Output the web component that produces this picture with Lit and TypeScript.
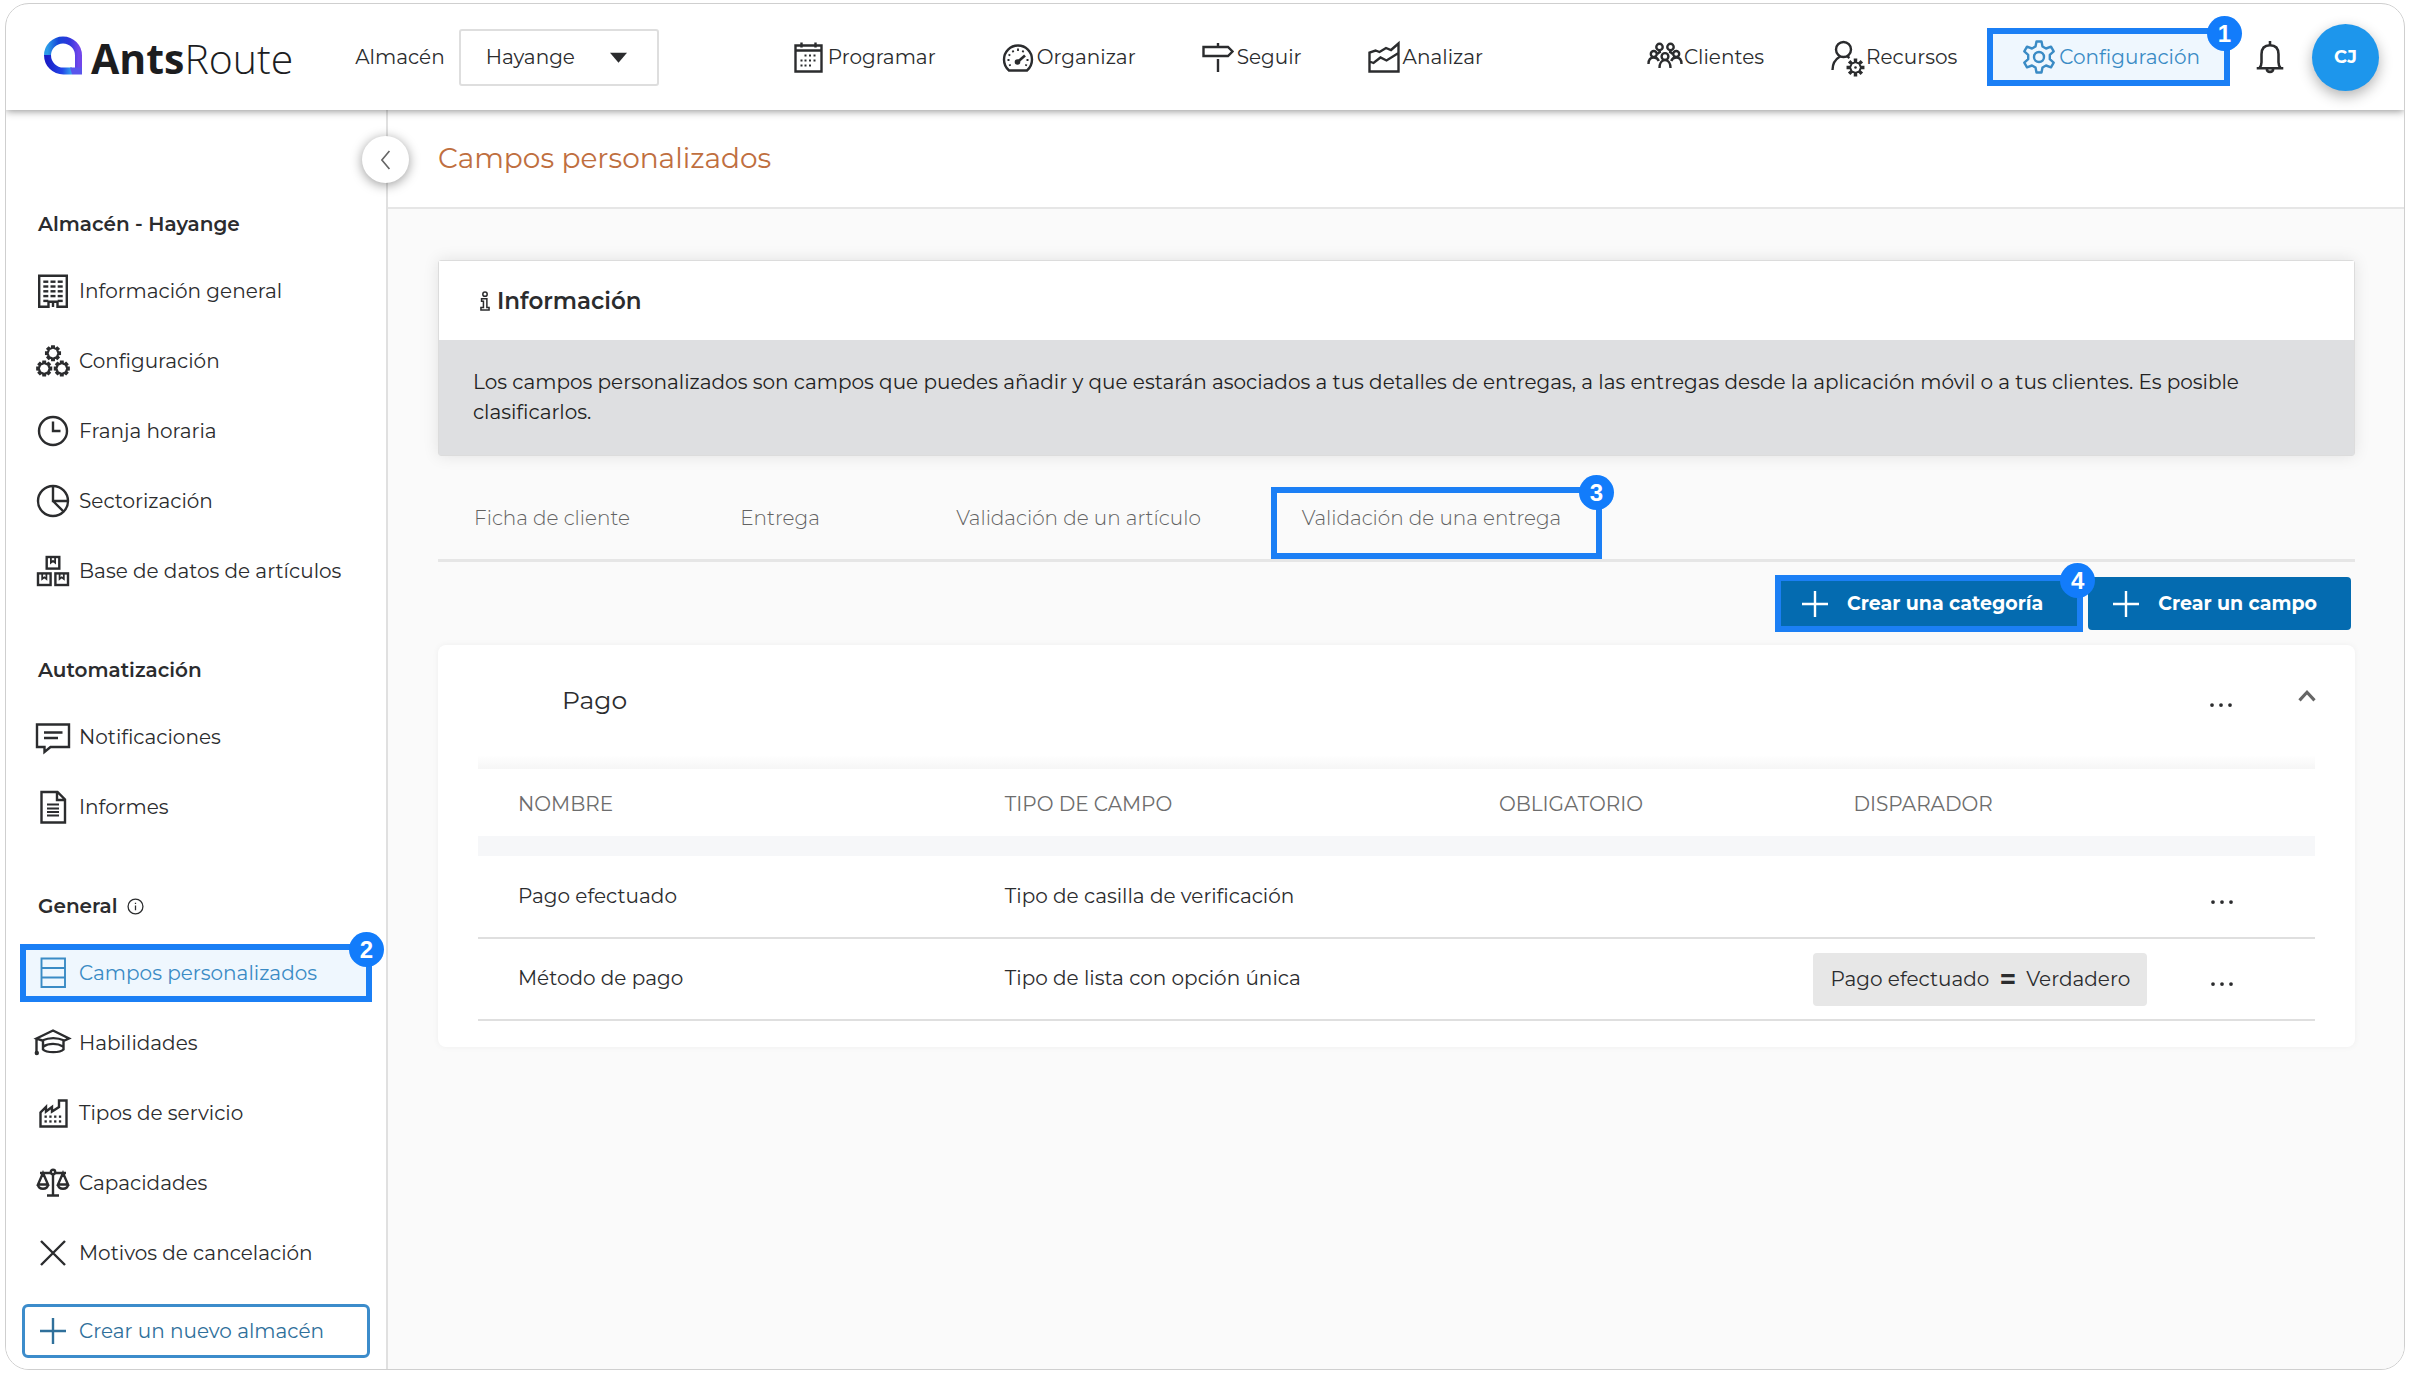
import { LitElement, html, svg, css, nothing, type TemplateResult, type SVGTemplateResult } from "lit";
import { customElement, property, state } from "lit/decorators.js";
import { classMap } from "lit/directives/class-map.js";

/** Outline of a cog with straight-sided teeth. */
function cog(cx: number, cy: number, outer: number, inner: number, teeth: number, top = 0.2, base = 0.3): string {
  const step = (Math.PI * 2) / teeth;
  const pts: string[] = [];
  for (let i = 0; i < teeth; i++) {
    const mid = i * step - Math.PI / 2;
    const corners: [number, number][] = [[inner, -base], [outer, -top], [outer, top], [inner, base]];
    for (const [r, f] of corners) {
      const a = mid + f * step;
      pts.push(`${(cx + r * Math.cos(a)).toFixed(2)} ${(cy + r * Math.sin(a)).toFixed(2)}`);
    }
  }
  return `M${pts.join("L")}Z`;
}

const grid = (xs: number[], ys: number[], w: number, h: number) =>
  ys.map((y) => xs.map((x) => svg`<rect x=${x} y=${y} width=${w} height=${h} fill="currentColor" stroke="none"></rect>`));

const box = (x: number, y: number) => svg`
  <rect x=${x} y=${y} width="12.6" height="11.6"></rect>
  <path stroke-width="1.8" d="M${x + 4.2} ${y}v5.6l2.1-1.6 2.1 1.6v-5.6"></path>`;

const ICONS: Record<string, SVGTemplateResult> = {
  calendar: svg`<path d="M2.500 4.500h26v26H2.500zM2.500 9.500h26M8.500 1.500v5M22.500 1.500v5"></path>
    ${grid([11.5, 16, 20.5], [13.5], 2, 2)}${grid([7.5, 11.5, 16, 20.5], [18.5], 2, 2)}${grid([7.5, 11.5, 16], [23.5], 2, 2)}`,
  gauge: svg`<path d="M7 29.500C3.500 26.500 2 22.500 2 18.500a14 14 0 0 1 28 0c0 4-1.500 8-5 11z"></path>
    <path d="M15 21.500l8-7" stroke-width="2.600"></path>
    <circle cx="15.500" cy="21" r="2.800" fill="currentColor" stroke="none"></circle>
    <path stroke-width="1.800" d="M16 7.500v2.500M10.500 9.500l1 1.800M21.500 9.500l-1 1.800M6.500 13.500l1.800 1M5.500 19h2M24.500 19h2M7 24.500l1.800-.8M25 24.500l-1.800-.8"></path>`,
  sign: svg`<path d="M1.500 6h24.500l4.500 4.500-4.500 4.500H1.500zM16 2v4M16 18v13"></path>`,
  chart: svg`<path d="M1.500 30.500V11.500l6-2 4 1.500 6.500-4 5 2 7.500-6.500v28zM1.500 20.500l4 1.500 7-5.500 6 3 12-7.500M1.500 20.500v8"></path>`,
  people: svg`<circle cx="10.500" cy="6" r="3.200"></circle><circle cx="21.500" cy="6" r="3.200"></circle>
    <circle cx="4.800" cy="13" r="3"></circle><circle cx="27.200" cy="13" r="3"></circle><circle cx="16" cy="15.500" r="3.400"></circle>
    <path d="M-.5 23c0-4 2-6.500 5.300-6.500 2.500 0 4.200 1.200 5 3.500M32.500 23c0-4-2-6.500-5.300-6.500-2.500 0-4.200 1.200-5 3.500M10.500 27c0-4.500 2-8 5.500-8s5.500 3.500 5.500 8M8.500 13c1-1.500 2-2.200 3.500-2.500M23.500 13c-1-1.500-2-2.200-3.500-2.500"></path>`,
  userCog: svg`<circle cx="12.500" cy="8.500" r="7.500"></circle><path d="M1.500 29c0-6 2.500-10.500 7.500-13.500M16.500 15.500l2 1.500"></path>
    <path stroke-width="2" d=${cog(24.500, 26.500, 8, 5.2, 8, 0.12, 0.16)}></path><circle cx="24.500" cy="26.500" r="1.300" fill="currentColor" stroke="none"></circle>`,
  cog: svg`<path stroke-linejoin="round" d="M13.500 .5h5l1 5 3.500 2 5-1.800 2.700 4.600-3.900 3.500v4.400l3.900 3.500-2.700 4.600-5-1.800-3.500 2-1 5h-5l-1-5-3.500-2-5 1.800-2.700-4.600 3.900-3.500v-4.400l-3.900-3.500L4 5.700l5 1.800 3.500-2z"></path><circle cx="16" cy="16" r="5"></circle>`,
  bell: svg`<path d="M3.500 26.500h25M6 26.500c1.500-1.500 2-3 2-5.500v-7.500c0-5.500 3-8.500 8-8.500s8 3 8 8.500V21c0 2.500.5 4 2 5.500M16 1v4M13 27c0 4 6 4 6 0"></path>`,
  building: svg`<path d="M2.200 .8h27.600v31h-9.300v-5h-9v5H2.200z" stroke-width="2.400"></path>${grid([6.3, 13.5, 20.7], [5.5, 10.3, 15.1, 19.9], 5, 2.4)}${grid([6.3, 20.7], [24.7], 5, 2.4)}<path d="M16 27v5"></path>`,
  cogs: svg`<g stroke-width="2.200"><path d=${cog(16, 8.2, 7, 5.2, 8, 0.16, 0.26)}></path><path d=${cog(7.2, 23.5, 7, 5.2, 8, 0.16, 0.26)}></path><path d=${cog(24.8, 23.5, 7, 5.2, 8, 0.16, 0.26)}></path></g>`,
  clock: svg`<circle cx="16" cy="16" r="14"></circle><path d="M16 6.500V16h7.500"></path>`,
  pie: svg`<circle cx="16" cy="16" r="15"></circle><path d="M16 1v15h15M16 16l10.500 10.500"></path>`,
  boxes: svg`${box(9.7, 2)}${box(1, 18.4)}${box(18.4, 18.4)}`,
  chat: svg`<path d="M0 3.500h32v22.500H13.500l-6 5V26H0zM7 11.500h18.500M7 17h14"></path>`,
  doc: svg`<path d="M4.500 1h16l7.500 7.500V31.500H4.500zM20 1v8h8"></path><path stroke-width="1.800" d="M10 13.500h12M10 17.500h12M10 21h12M10 24.500h12"></path>`,
  fields: svg`<path d="M4.500 1.500h23.500v28.500h-23.500zM4.500 11h23.500M4.500 20.500h23.500" stroke-width="1.900"></path>`,
  cap: svg`<path d="M-.5 11.500L16 3.500l16 8-4.500 2c-7-3-15.500-3-22.500 0zM6 14v8.500c3.500 3.500 17 3.500 20.500 0V14M6.500 19.500c5-3.500 14-3.500 19.500 0M-.5 11.500v14"></path><circle cx="-.2" cy="26" r="2.200" fill="currentColor" stroke="none"></circle>`,
  factory: svg`<path d="M3.500 29.500V15.500L9 10v4.500l6-4.500v4.500l7-4.500V3.500h7.500v26z"></path>${grid([7.5, 12.3, 17.1, 21.9], [18.5, 23.3], 2.3, 2.3)}`,
  scale: svg`<circle cx="16" cy="5" r="2.200"></circle><path d="M16 7v21M10 28.500h12M3 6h10.500M18.500 6H29M6 6L1 17.500h10zM26 6l-5 11.500h10zM1 18c.8 5 9.200 5 10 0M21 18c.8 5 9.200 5 10 0"></path>`,
  cross: svg`<path d="M4 4l24 24M28 4L4 28"></path>`,
  plus: svg`<path d="M16 3v26M3 16h26"></path>`,
  info: svg`<circle cx="16" cy="16" r="14"></circle><path d="M16 14v9M16 9v2.500"></path>`,
  letterI: svg`<circle cx="16" cy="5" r="3.500"></circle><path d="M10.500 12.500h8.500v14h3.500v4h-13v-4h4v-10h-3z"></path>`,
  dots: svg`<g fill="currentColor" stroke="none"><circle cx="4" cy="16" r="2.500"></circle><circle cx="16" cy="16" r="2.500"></circle><circle cx="28" cy="16" r="2.500"></circle></g>`,
  back: svg`<path d="M21 3L10 16l11 13"></path>`,
  up: svg`<path stroke-width="5" d="M4 23L16 10l12 13"></path>`,
  caret: svg`<path fill="currentColor" stroke="none" d="M0 7h32L16 26z"></path>`,
};

@customElement("line-icon")
export class LineIcon extends LitElement {
  @property() name = "";
  static styles = css`
    :host { display: inline-flex; flex: none; width: 32px; height: 32px; }
    svg { width: 100%; height: 100%; overflow: visible; }
  `;
  render() {
    return html`<svg viewBox="0 0 32 32" fill="none" stroke="currentColor" stroke-width="2.400" aria-hidden="true">${ICONS[this.name] ?? nothing}</svg>`;
  }
}

interface Item { icon: string; label: string; step?: number; }

const MAIN_NAV: Item[] = [
  { icon: "calendar", label: "Programar" },
  { icon: "gauge", label: "Organizar" },
  { icon: "sign", label: "Seguir" },
  { icon: "chart", label: "Analizar" },
];
const SIDE_NAV: Item[] = [
  { icon: "people", label: "Clientes" },
  { icon: "userCog", label: "Recursos" },
  { icon: "cog", label: "Configuración", step: 1 },
];
const SECTIONS: { title: string; info?: boolean; items: Item[] }[] = [
  { title: "Almacén - Hayange", items: [
    { icon: "building", label: "Información general" },
    { icon: "cogs", label: "Configuración" },
    { icon: "clock", label: "Franja horaria" },
    { icon: "pie", label: "Sectorización" },
    { icon: "boxes", label: "Base de datos de artículos" },
  ] },
  { title: "Automatización", items: [
    { icon: "chat", label: "Notificaciones" },
    { icon: "doc", label: "Informes" },
  ] },
  { title: "General", info: true, items: [
    { icon: "fields", label: "Campos personalizados", step: 2 },
    { icon: "cap", label: "Habilidades" },
    { icon: "factory", label: "Tipos de servicio" },
    { icon: "scale", label: "Capacidades" },
    { icon: "cross", label: "Motivos de cancelación" },
  ] },
];
const TABS = ["Ficha de cliente", "Entrega", "Validación de un artículo", "Validación de una entrega"];
const ROWS: { name: string; type: string; trigger?: [string, string] }[] = [
  { name: "Pago efectuado", type: "Tipo de casilla de verificación" },
  { name: "Método de pago", type: "Tipo de lista con opción única", trigger: ["Pago efectuado", "Verdadero"] },
];

@customElement("app-root")
export class AppRoot extends LitElement {
  @state() private open = true;

  static styles = css`
    :host {
      display: block;
      --mark: #1b7ff5;
      --ink: #2b2c2e;
      font: 400 20px/30px Montserrat, Inter, "Open Sans", sans-serif;
      color: var(--ink);
      background: #fff;
    }
    *, *::before { box-sizing: border-box; }
    a { color: inherit; text-decoration: none; }
    button, select { font: inherit; color: inherit; border: 0; background: none; padding: 0; margin: 0; }
    button { cursor: pointer; }
    h1, h2, h3, p, ul { margin: 0; padding: 0; font: inherit; }
    ul { list-style: none; }

    .frame {
      display: flex; flex-direction: column;
      min-height: calc(100vh - 7px);
      margin: 3px 4px 4px 5px;
      border: 1px solid #cfcfcf; border-radius: 24px;
      overflow: hidden;
    }

    .top {
      position: relative; z-index: 2;
      display: flex; align-items: center;
      min-height: 106px; padding: 0 25px 0 36px;
      background: #fff; box-shadow: 0 1px 8px rgba(0, 0, 0, 0.45);
    }
    .logo { display: flex; align-items: center; gap: 7px; height: 52px; }
    .logo svg { width: 42px; height: 42px; }
    .wordmark { font: 300 41px/52px "Open Sans", "Noto Sans", sans-serif; color: #1c1d1f; padding-top: 2px; }
    .wordmark b { font-weight: 700; }
    .depot { display: flex; align-items: center; gap: 14px; margin-left: 62px; }
    .picker { display: grid; align-items: center; width: 200px; }
    .picker > * { grid-area: 1 / 1; }
    .picker select {
      appearance: none; width: 100%; height: 57px; padding: 0 25px;
      border: 2px solid #dedede; border-radius: 3px; background: #fff;
    }
    .picker line-icon { width: 17px; height: 17px; justify-self: end; margin-right: 32px; pointer-events: none; }
    .nav { display: flex; align-items: center; gap: 66px; }
    .nav.primary { margin-left: 134px; }
    .nav.secondary { margin-left: auto; gap: 30px; }
    .nav a { position: relative; display: flex; align-items: center; gap: 3px; height: 58px; }
    .nav.secondary a:first-child { padding-right: 37px; }
    .nav.secondary a.marked { padding: 0 24px 0 30px; gap: 4px; }
    .marked { position: relative; border: 6px solid var(--mark); background: #eff7fe; color: #3a8bc5; }
    .badge {
      position: absolute; top: -18px; right: -18px; z-index: 1;
      width: 35px; height: 35px; border-radius: 50%;
      background: #127cfb; color: #fff; text-align: center;
      font: 700 24px/35px "Liberation Sans", sans-serif;
    }
    .bell { display: flex; margin: 0 25px 0 23px; }
    .bell line-icon { width: 34px; height: 34px; }
    .avatar {
      width: 67px; height: 67px; border-radius: 50%; flex: none;
      background: #1d96ec; color: #fff; font-size: 18px; font-weight: 700;
      box-shadow: 0 5px 14px rgba(0, 0, 0, 0.3);
    }

    .body { flex: 1; display: flex; }
    .side { flex: none; width: 382px; border-right: 2px solid #e0e0e0; padding: 102px 14px 8px; background: #fff; }
    .side h2 { display: flex; align-items: center; gap: 9px; padding-left: 18px; margin-bottom: 26px; line-height: 24px; font-weight: 600; }
    .side h2 line-icon { width: 17px; height: 17px; }
    .side ul { display: flex; flex-direction: column; gap: 12px; margin-bottom: 58px; }
    .side section:last-of-type ul { margin-bottom: 22px; }
    .side li a { display: flex; align-items: center; gap: 10px; height: 58px; padding-left: 11px; border: 6px solid transparent; }
    .side li a.marked { border-color: var(--mark); }
    .new {
      display: flex; align-items: center; gap: 10px; width: calc(100% - 4px); height: 54px; margin-left: 2px; padding-left: 12px;
      border: 3px solid #3c8ccb; border-radius: 6px; color: #2f709b;
    }

    .main { position: relative; flex: 1; min-width: 0; background: #fafafa; }
    .fold {
      position: absolute; left: -26px; top: 26px;
      display: grid; place-items: center; width: 47px; height: 47px; border-radius: 50%;
      background: #fff; color: #666; box-shadow: 0 2px 12px rgba(0, 0, 0, 0.4);
    }
    .fold line-icon { width: 22px; height: 22px; }
    .title { height: 99px; padding: 0 50px; background: #fff; border-bottom: 2px solid #e6e6e6; }
    .title h1 { color: #bf6f3f; font-size: 28px; line-height: 96px; }
    .content { padding: 51px 49px 40px 50px; }
    .notice { border: 1px solid #dcdcdc; border-radius: 3px; box-shadow: 0 0 16px rgba(0, 0, 0, 0.1); }
    .notice h2 { display: flex; align-items: center; gap: 2px; height: 79px; padding-left: 36px; background: #fff; font-size: 23px; font-weight: 600; }
    .notice h2 line-icon { width: 20px; height: 20px; }
    .notice p { padding: 27px 80px 28px 34px; background: #dedfe1; color: #222; }

    .tabs { display: flex; padding-top: 31px; border-bottom: 3px solid #e6e6e6; color: #626262; font-weight: 300; }
    .tabs button { height: 72px; width: 228px; padding-bottom: 10px; }
    .tabs .wide { width: 377px; padding-right: 8px; }
    .tabs .marked { width: 331px; background: none; color: inherit; padding: 0 10px 10px 0; }

    .actions { display: flex; justify-content: flex-end; align-items: center; gap: 5px; padding: 13px 4px 13px 0; }
    .actions button {
      position: relative; display: flex; align-items: center; gap: 16px; height: 53px; padding: 0 34px 0 22px;
      border-radius: 4px; background: #046bb0; color: #fff; font-size: 19px; font-weight: 700;
    }
    .actions button.marked { height: 57px; padding-left: 18px; border-radius: 0; }

    .card { padding: 0 40px 26px 40px; background: #fff; border-radius: 8px; box-shadow: 0 0 6px rgba(0, 0, 0, 0.05); }
    .card header { display: flex; align-items: center; height: 110px; padding-left: 84px; }
    .card h2 { flex: 1; font-size: 25px; line-height: 34px; }
    .card header button { display: flex; }
    .card header .toggle { margin: 0 -2px 0 64px; padding-bottom: 8px; color: #666; }
    .toggle line-icon { width: 20px; height: 20px; }
    .dots line-icon { width: 24px; height: 24px; }
    .card header .dots { padding-top: 10px; }

    table { width: 100%; table-layout: fixed; border-collapse: collapse; }
    .shade { height: 14px; background: linear-gradient(#fff, #f6f6f6); }
    th { height: 67px; padding: 2px 0 0 40px; text-align: left; font-weight: 400; color: #6d6d6d; }
    td { height: 82px; padding: 0 0 2px 40px; border-bottom: 2px solid #dfdfdf; }
    .band td { height: 20px; padding: 0; border: 0; background: #f6f7f9; }
    td.rule { padding-left: 0; padding-bottom: 0; }
    .chip { display: inline-flex; align-items: center; gap: 10px; height: 53px; padding: 0 17px; border-radius: 4px; background: #e7e7e7; white-space: nowrap; }
    .chip b { font-size: 28px; }
    td .dots { display: flex; padding-top: 12px; }
    .name { width: 26.5%; }
    .type { width: 26.900%; }
    .req { width: 19.3%; }
    .trig { width: 19.4%; }
  `;

  private badge(step?: number) {
    return step ? html`<span class="badge">${step}</span>` : nothing;
  }

  private link(item: Item): TemplateResult {
    return html`<a href="#" class=${classMap({ marked: !!item.step })}>
      <line-icon name=${item.icon}></line-icon><span>${item.label}</span>${this.badge(item.step)}
    </a>`;
  }

  private header() {
    return html`<header class="top">
      <div class="logo">
        <svg viewBox="0 0 42 42" aria-hidden="true">
          <defs>
            <linearGradient id="ring" x1="0" y1="0" x2="1" y2="0">
              <stop offset="0" stop-color="#2b9be8"></stop><stop offset="0.350" stop-color="#1546d8"></stop>
              <stop offset="0.700" stop-color="#2f36dc"></stop><stop offset="1" stop-color="#7146ea"></stop>
            </linearGradient>
            <linearGradient id="foot" x1="0" y1="0" x2="1" y2="0">
              <stop offset="0" stop-color="#1a1fc8"></stop><stop offset="0.600" stop-color="#2346e8"></stop><stop offset="1" stop-color="#35a8ef"></stop>
            </linearGradient>
          </defs>
          <path fill="none" stroke="url(#ring)" stroke-width="7" d="M36.500 37.500V19.500A15.500 15.500 0 0 0 5.500 19.500"></path>
          <path fill="none" stroke="url(#foot)" stroke-width="7" d="M5.500 19c0 9 7 16 16 16H30"></path>
          <path fill="#5a55ec" d="M28 31.500h12v7H30z"></path>
        </svg>
        <span class="wordmark"><b>Ants</b>Route</span>
      </div>
      <div class="depot">
        <label for="depot">Almacén</label>
        <div class="picker">
          <select id="depot"><option>Hayange</option></select>
          <line-icon name="caret"></line-icon>
        </div>
      </div>
      <nav class="nav primary">${MAIN_NAV.map((i) => this.link(i))}</nav>
      <nav class="nav secondary">${SIDE_NAV.map((i) => this.link(i))}</nav>
      <button class="bell" aria-label="Notificaciones"><line-icon name="bell"></line-icon></button>
      <button class="avatar">CJ</button>
    </header>`;
  }

  private sidebar() {
    return html`<aside class="side">
      ${SECTIONS.map((s) => html`<section>
        <h2>${s.title}${s.info ? html`<line-icon name="info"></line-icon>` : nothing}</h2>
        <ul>${s.items.map((i) => html`<li>${this.link(i)}</li>`)}</ul>
      </section>`)}
      <button class="new"><line-icon name="plus"></line-icon>Crear un nuevo almacén</button>
    </aside>`;
  }

  private dots() {
    return html`<button class="dots" aria-label="Opciones"><line-icon name="dots"></line-icon></button>`;
  }

  private table() {
    return html`<div class="shade"></div>
      <table>
        <thead><tr>
          <th class="name">NOMBRE</th><th class="type">TIPO DE CAMPO</th><th class="req">OBLIGATORIO</th>
          <th class="trig">DISPARADOR</th><th></th>
        </tr></thead>
        <tbody>
          <tr class="band"><td colspan="5"></td></tr>
          ${ROWS.map((r) => html`<tr>
            <td>${r.name}</td><td>${r.type}</td><td></td>
            <td class="rule">${r.trigger ? html`<span class="chip">${r.trigger[0]}<b>=</b>${r.trigger[1]}</span>` : nothing}</td>
            <td>${this.dots()}</td>
          </tr>`)}
        </tbody>
      </table>`;
  }

  render() {
    return html`<div class="frame">
      ${this.header()}
      <div class="body">
        ${this.sidebar()}
        <main class="main">
          <button class="fold" aria-label="Contraer menú"><line-icon name="back"></line-icon></button>
          <div class="title"><h1>Campos personalizados</h1></div>
          <div class="content">
            <section class="notice">
              <h2><line-icon name="letterI"></line-icon>Información</h2>
              <p>Los campos personalizados son campos que puedes añadir y que estarán asociados a tus detalles de entregas, a las entregas desde la aplicación móvil o a tus clientes. Es posible clasificarlos.</p>
            </section>
            <div class="tabs" role="tablist">
              ${TABS.map((t, i) => html`<button role="tab" class=${classMap({ wide: i === 2, marked: i === 3 })}>${t}${i === 3 ? this.badge(3) : nothing}</button>`)}
            </div>
            <div class="actions">
              <button class="marked"><line-icon name="plus"></line-icon>Crear una categoría${this.badge(4)}</button>
              <button><line-icon name="plus"></line-icon>Crear un campo</button>
            </div>
            <section class="card">
              <header>
                <h2>Pago</h2>
                ${this.dots()}
                <button class="toggle" aria-label="Plegar" @click=${() => (this.open = !this.open)}><line-icon name="up"></line-icon></button>
              </header>
              ${this.open ? this.table() : nothing}
            </section>
          </div>
        </main>
      </div>
    </div>`;
  }
}
